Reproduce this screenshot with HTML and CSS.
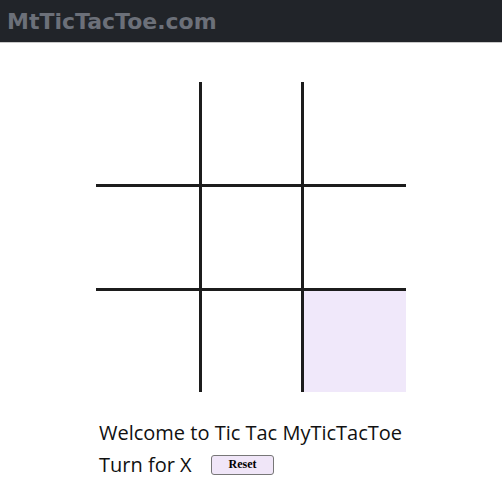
FILE: index.html
```html
<!DOCTYPE html>
<html>
<head>
<meta charset="utf-8">
<title>MtTicTacToe.com</title>
<link rel="stylesheet" href="styles.css">
</head>
<body>
<header class="topbar"><span class="logo">MtTicTacToe.com</span></header>
<main class="page">
  <div class="board">
    <div class="cell"></div><div class="cell"></div><div class="cell"></div>
    <div class="cell"></div><div class="cell"></div><div class="cell"></div>
    <div class="cell"></div><div class="cell"></div><div class="cell hl"></div>
  </div>
  <div class="info">
    <div class="welcome">Welcome to Tic Tac MyTicTacToe</div>
    <div class="turnrow"><span class="turn">Turn for X</span><button class="reset">Reset</button></div>
  </div>
</main>
</body>
</html>
```
FILE: styles.css
```css
html, body { margin: 0; padding: 0; background: #fff; }
.topbar {
  height: 42px;
  background: #212429;
  border-bottom: 1px solid #c9c9c9;
  display: flex;
  align-items: center;
  padding-left: 7px;
}
.logo {
  font-family: "DejaVu Sans", sans-serif;
  font-weight: bold;
  font-size: 22px;
  color: #6c7079;
}
.page {
  display: flex;
  flex-direction: column;
  align-items: center;
  padding-top: 39px;
}
.board {
  display: grid;
  grid-template-columns: 103px 99px 102px;
  grid-template-rows: 102px 101px 101px;
  gap: 3px;
  background: #1c1c1c;
}
.cell { background: #fff; }
.cell.hl { background: #f0e8fa; }
.info {
  width: 310px;
  padding-left: 3px;
  box-sizing: border-box;
  margin-top: 27px;
  font-family: "Open Sans", sans-serif;
  font-size: 20px;
  color: #111;
}
.welcome { line-height: 27px; white-space: nowrap; }
.turnrow { display: flex; align-items: center; height: 27px; margin-top: 5px; }
.turn { width: 112px; white-space: nowrap; }
.reset {
  width: 63px;
  height: 20px;
  padding: 0;
  font-family: "Liberation Serif", serif;
  font-weight: bold;
  font-size: 12px;
  color: #000;
  background: #f0e6f8;
  border: 1px solid #777;
  border-radius: 3px;
}
```
